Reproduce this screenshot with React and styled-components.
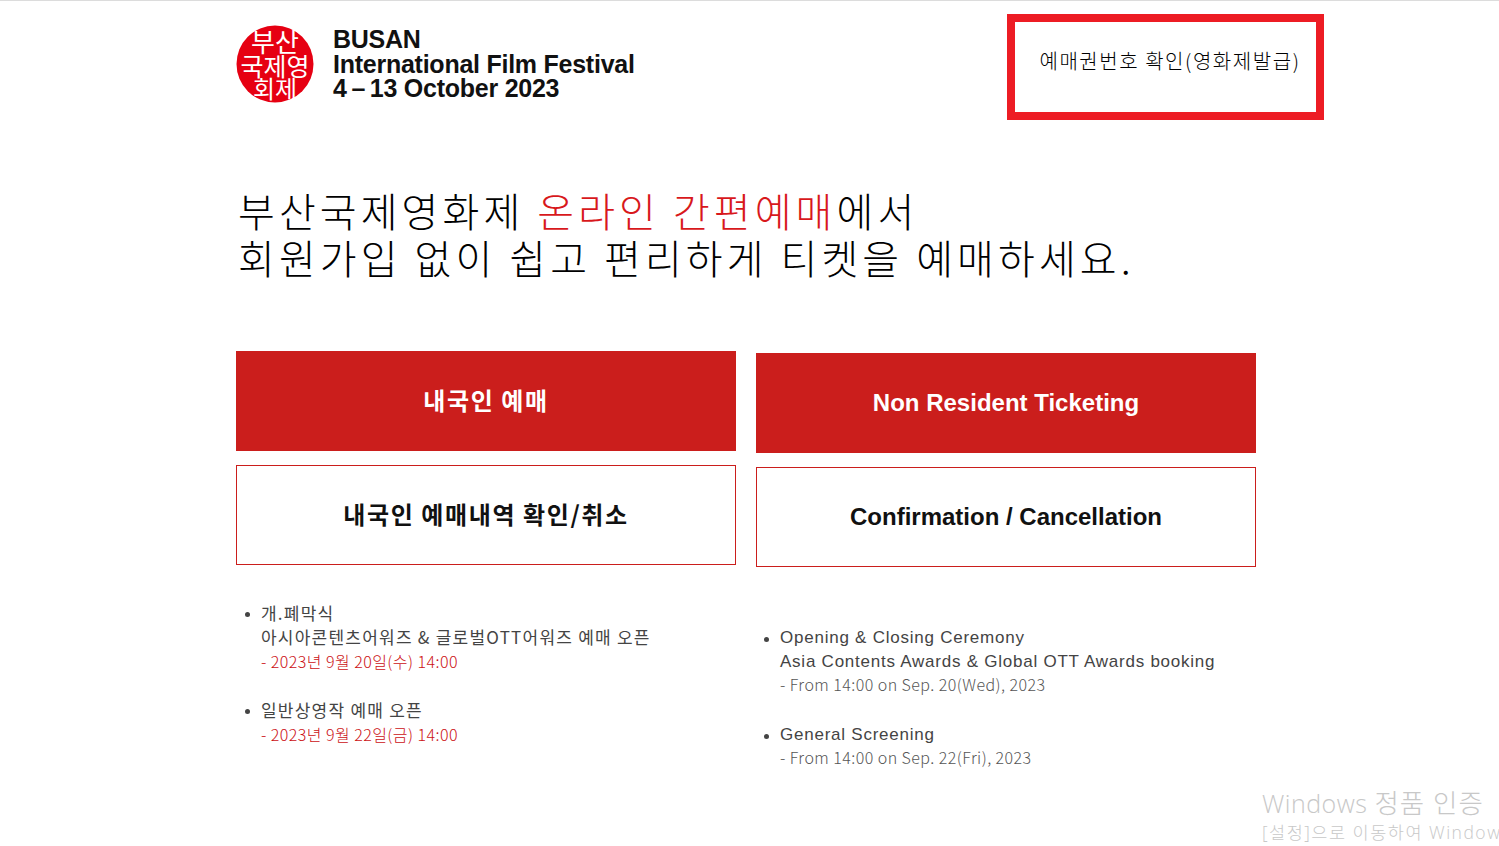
import React from "react";
import styled, { createGlobalStyle } from "styled-components";

const KOREAN = `"Noto Sans CJK KR", "Liberation Sans", sans-serif`;
const LATIN = `"Liberation Sans", "Noto Sans CJK KR", sans-serif`;
const RED = "#cb1e1c";

const GlobalStyle = createGlobalStyle`
  html, body {
    margin: 0;
    padding: 0;
    height: 100%;
    background: #fff;
    overflow: hidden;
  }
`;

const Page = styled.div`
  position: relative;
  height: 846px;
  box-sizing: border-box;
  border-top: 1px solid #dcdcdc;
  padding: 13px 0 0 236px;
  font-family: ${KOREAN};
  overflow: hidden;
`;

const Header = styled.header`
  display: flex;
  justify-content: space-between;
  width: 1088px;
  height: 106px;
`;

const Brand = styled.div`
  display: flex;
  align-items: center;
  gap: 19px;
  height: 100px;
`;

const BrandText = styled.div`
  font-family: ${LATIN};
  font-weight: 700;
  font-size: 25px;
  line-height: 24.5px;
  letter-spacing: -0.25px;
  color: #111;
`;

const TicketBox = styled.a`
  display: flex;
  align-items: center;
  justify-content: center;
  box-sizing: border-box;
  width: 317px;
  height: 106px;
  border: 8px solid #ed1c24;
  padding: 0 0 14px 9px;
  font-size: 20px;
  font-weight: 300;
  letter-spacing: 1.55px;
  color: #000;
  white-space: nowrap;
`;

const Headline = styled.h1`
  margin: 67px 0 0 2px;
  font-size: 40px;
  line-height: 47px;
  font-weight: 300;
  letter-spacing: 4.1px;
  color: #000;
  white-space: nowrap;
`;

const Accent = styled.span`
  color: #d8181c;
`;

const Columns = styled.div`
  display: grid;
  grid-template-columns: 500px 500px;
  column-gap: 20px;
  margin-top: 70px;
`;

const Column = styled.section`
  padding-top: ${(p) => p.$offset || 0}px;
`;

const ActionButton = styled.a`
  display: flex;
  align-items: center;
  justify-content: center;
  box-sizing: border-box;
  height: 100px;
  padding-bottom: ${(p) => (p.$korean ? 3 : 0)}px;
  background: ${(p) => (p.$outline ? "#fff" : RED)};
  border: 1px solid ${RED};
  color: ${(p) => (p.$outline ? "#111" : "#fff")};
  font-family: ${(p) => (p.$korean ? KOREAN : LATIN)};
  font-weight: 700;
  font-size: 24px;
  letter-spacing: ${(p) => (p.$korean ? 1.6 : 0)}px;
  & + & {
    margin-top: 14px;
  }
`;

const NoticeList = styled.ul`
  list-style: none;
  margin: ${(p) => p.$top}px 0 0;
  padding: 0 0 0 ${(p) => p.$indent}px;
  font-family: ${(p) => (p.$latin ? LATIN : KOREAN)};
  font-size: 17px;
  line-height: 24.2px;
  color: #444;
  letter-spacing: ${(p) => p.$spacing}px;
  white-space: nowrap;
`;

const Notice = styled.li`
  position: relative;
  margin-bottom: ${(p) => (p.$latin ? 26 : 24)}px;
  &::before {
    content: "";
    position: absolute;
    left: -16px;
    top: 11px;
    width: 5px;
    height: 5px;
    border-radius: 50%;
    background: #444;
  }
`;

const NoticeDate = styled.span`
  display: block;
  margin-top: ${(p) => (p.$latin ? -2 : 0)}px;
  font-family: ${KOREAN};
  font-size: 16px;
  font-weight: 300;
  letter-spacing: 0.45px;
  color: ${(p) => (p.$latin ? "#555" : "#cc1014")};
`;

const Watermark = styled.div`
  position: absolute;
  left: 1262px;
  top: 784px;
  white-space: nowrap;
  color: #c8c8c8;
  font-family: "Open Sans", "Noto Sans CJK KR", sans-serif;
  font-size: 25px;
  line-height: 36px;
  font-weight: 300;
  letter-spacing: 0.5px;
`;

const WatermarkKorean = styled.span`
  font-size: 26.5px;
  letter-spacing: 1px;
`;

const WatermarkSub = styled.div`
  font-size: 17.5px;
  line-height: 22px;
  letter-spacing: 1.5px;
`;

const Seal = () => (
  <svg width="78" height="78" viewBox="0 0 78 78" aria-label="부산국제영화제">
    <circle cx="39" cy="39" r="38.5" fill="#e60012" />
    <g fill="#fff" fontFamily={KOREAN} fontWeight="400" textAnchor="middle">
      <text x="39" y="27" fontSize="26">부산</text>
      <text x="39" y="51" fontSize="25">국제영</text>
      <text x="39" y="73" fontSize="24">회제</text>
    </g>
  </svg>
);

const App = () => (
  <Page>
    <GlobalStyle />
    <Header>
      <Brand>
        <Seal />
        <BrandText>
          BUSAN
          <br />
          International Film Festival
          <br />4{"\u2009–\u2009"}13 October 2023
        </BrandText>
      </Brand>
      <TicketBox>예매권번호 확인(영화제발급)</TicketBox>
    </Header>

    <Headline>
      부산국제영화제 <Accent>온라인 간편예매</Accent>에서
      <br />
      회원가입 없이 쉽고 편리하게 티켓을 예매하세요.
    </Headline>

    <Columns>
      <Column>
        <ActionButton $korean>내국인 예매</ActionButton>
        <ActionButton $korean $outline>
          내국인 예매내역 확인/취소
        </ActionButton>
        <NoticeList $top={36} $indent={25} $spacing={1.23}>
          <Notice>
            개.폐막식
            <br />
            아시아콘텐츠어워즈 &amp; 글로벌OTT어워즈 예매 오픈
            <NoticeDate>- 2023년 9월 20일(수) 14:00</NoticeDate>
          </Notice>
          <Notice>
            일반상영작 예매 오픈
            <NoticeDate>- 2023년 9월 22일(금) 14:00</NoticeDate>
          </Notice>
        </NoticeList>
      </Column>
      <Column $offset={2}>
        <ActionButton>Non Resident Ticketing</ActionButton>
        <ActionButton $outline>Confirmation / Cancellation</ActionButton>
        <NoticeList $latin $top={59} $indent={24} $spacing={0.76}>
          <Notice $latin>
            Opening &amp; Closing Ceremony
            <br />
            Asia Contents Awards &amp; Global OTT Awards booking
            <NoticeDate $latin>- From 14:00 on Sep. 20(Wed), 2023</NoticeDate>
          </Notice>
          <Notice $latin>
            General Screening
            <NoticeDate $latin>- From 14:00 on Sep. 22(Fri), 2023</NoticeDate>
          </Notice>
        </NoticeList>
      </Column>
    </Columns>

    <Watermark>
      Windows <WatermarkKorean>정품 인증</WatermarkKorean>
      <WatermarkSub>[설정]으로 이동하여 Windows</WatermarkSub>
    </Watermark>
  </Page>
);

export default App;
